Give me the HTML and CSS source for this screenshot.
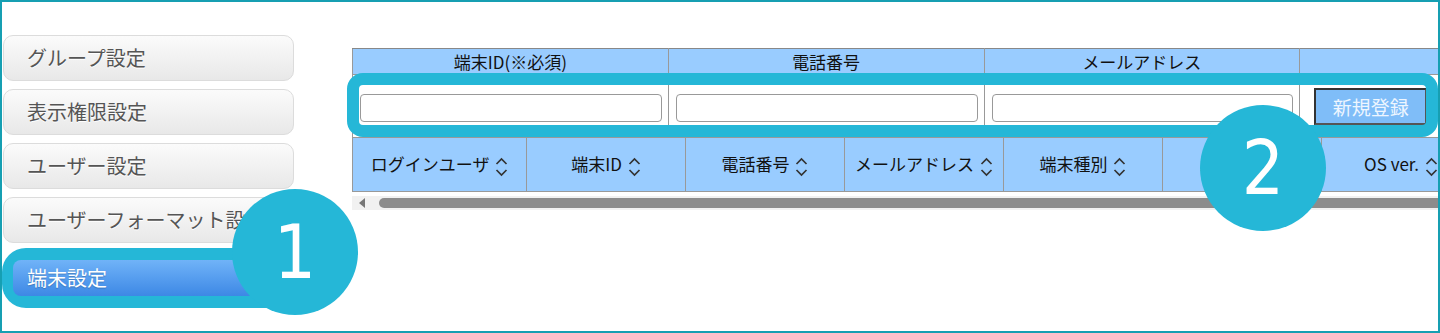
FILE: index.html
```html
<!DOCTYPE html>
<html lang="ja">
<head>
    <meta charset="UTF-8">
    <title>端末設定</title>
    <link rel="stylesheet" href="styles.css">
</head>
<body>
    <div class="frame">
        <aside class="sidebar">
            <a class="nav-btn">グループ設定</a>
            <a class="nav-btn">表示権限設定</a>
            <a class="nav-btn">ユーザー設定</a>
            <a class="nav-btn">ユーザーフォーマット設定</a>
            <div class="callout">
                <a class="nav-btn active">端末設定</a>
            </div>
        </aside>

        <main class="content">
            <table class="entry">
                <tr class="entry-head">
                    <th>端末ID(※必須)</th>
                    <th>電話番号</th>
                    <th>メールアドレス</th>
                    <th></th>
                </tr>
                <tr class="entry-row">
                    <td><input type="text"></td>
                    <td><input type="text"></td>
                    <td><input type="text"></td>
                    <td class="btn-cell"><button class="add-btn">新規登録</button></td>
                </tr>
            </table>

            <table class="list">
                <tr>
                    <th class="first">ログインユーザ <span class="sort"></span></th>
                    <th>端末ID <span class="sort"></span></th>
                    <th>電話番号 <span class="sort"></span></th>
                    <th>メールアドレス <span class="sort"></span></th>
                    <th>端末種別 <span class="sort"></span></th>
                    <th>App ver. <span class="sort"></span></th>
                    <th>OS ver. <span class="sort"></span></th>
                </tr>
            </table>

            <div class="scrollbar">
                <span class="arrow"></span>
                <span class="thumb"></span>
            </div>
        </main>

        <div class="ring"></div>
        <div class="badge badge-1">1</div>
        <div class="badge badge-2">2</div>
    </div>

    <script>
        // sort icons (chevron up / down)
        document.querySelectorAll('.sort').forEach(function(el) {
            el.innerHTML = '<svg width="13" height="22" viewBox="0 0 13 22"><path d="M1.5 8 L6.5 3 L11.5 8 M1.5 14 L6.5 19 L11.5 14" fill="none" stroke="#333" stroke-width="1.7"/></svg>';
        });
    </script>
</body>
</html>
```

FILE: styles.css
```css
body {
    margin: 0;
    background: #fff;
    font-family: 'Noto Sans CJK JP', 'Noto Sans', sans-serif;
}

.frame {
    position: relative;
    width: 1440px;
    height: 333px;
    box-sizing: border-box;
    border: 2px solid #169fb2;
    display: flex;
    overflow: hidden;
    background: #fff;
}

/* sidebar */
.sidebar {
    width: 300px;
    flex-shrink: 0;
    padding-top: 33px;
    display: flex;
    flex-direction: column;
}

.nav-btn {
    display: block;
    box-sizing: border-box;
    width: 291px;
    height: 46px;
    margin: 0 0 8px 1px;
    padding-left: 23px;
    line-height: 44px;
    font-size: 20px;
    color: #555;
    text-shadow: 0 1px 0 #fff;
    white-space: nowrap;
    overflow: hidden;
    background: linear-gradient(#fbfbfb, #e8e8e8);
    border: 1px solid #dcdcdc;
    border-radius: 10px;
}

.callout {
    margin-top: -3px;
    width: 300px;
    box-sizing: border-box;
    padding: 12px 11px;
    background: #25b7d7;
    border-radius: 24px;
}

.nav-btn.active {
    width: 276px;
    height: 36px;
    margin: 0;
    padding-left: 14px;
    line-height: 36px;
    color: #fff;
    text-shadow: 0 1px 1px rgba(0,0,0,0.2);
    background: linear-gradient(#70b3f8, #3d88e5);
    border: none;
    border-radius: 8px;
}

/* table area */
.content {
    flex: 1;
    min-width: 0;
    overflow: hidden;
    padding: 46px 0 0 50px;
}

table {
    border-collapse: collapse;
    table-layout: fixed;
    color: #111;
}

.entry {
    width: 1264px;
}

.entry th {
    height: 25px;
    padding: 0;
    font-size: 17px;
    font-weight: normal;
    line-height: 24px;
    background: #99ccff;
    border: 1px solid #999;
    border-top-color: #888;
}

.entry td {
    height: 59px;
    padding: 3px 6px 0 7px;
    background: #fff;
    border-left: 1px solid #999;
    border-right: 1px solid #999;
}

.entry input {
    display: block;
    width: 100%;
    height: 28px;
    box-sizing: border-box;
    border: 1px solid #999;
    border-radius: 4px;
    background: #fff;
}

.entry td.btn-cell {
    padding: 0 0 0 14px;
}

.add-btn {
    width: 113px;
    height: 37px;
    background: #7fbdf8;
    color: #eef6ff;
    font-family: inherit;
    font-size: 19px;
    border: 2px solid #333;
    border-right-color: #555;
    border-bottom-color: #555;
    padding: 0;
}

.list {
    width: 1122px;
}

.list th {
    width: 158px;
    height: 53px;
    padding: 0;
    font-size: 17px;
    font-weight: normal;
    background: #99ccff;
    border: 1px solid #999;
    white-space: nowrap;
}

.list th.first {
    width: 173px;
}

.sort {
    display: inline-block;
    vertical-align: middle;
    margin-left: 2px;
}

.sort svg {
    display: block;
}

.scrollbar {
    margin-top: 4px;
    height: 14px;
    width: 1100px;
    background: #f1f1f1;
    display: flex;
    align-items: center;
}

.arrow {
    width: 0;
    height: 0;
    margin-left: 7px;
    border-top: 5px solid transparent;
    border-bottom: 5px solid transparent;
    border-right: 6px solid #777;
}

.thumb {
    margin-left: 14px;
    flex: 1;
    height: 10px;
    border-radius: 5px;
    background: #8c8c8c;
}

/* annotations */
.ring {
    position: absolute;
    left: 345px;
    top: 71px;
    width: 1091px;
    height: 64px;
    box-sizing: border-box;
    border: 12px solid #25b7d7;
    border-radius: 16px;
}

.badge {
    position: absolute;
    width: 126px;
    height: 126px;
    border-radius: 50%;
    background: #25b7d7;
    color: #fff;
    font-family: 'DejaVu Sans Condensed', 'DejaVu Sans', sans-serif;
    font-size: 74px;
    line-height: 126px;
    text-align: center;
}

.badge-1 {
    left: 230px;
    top: 187px;
}

.badge-2 {
    left: 1198px;
    top: 103px;
}
```
